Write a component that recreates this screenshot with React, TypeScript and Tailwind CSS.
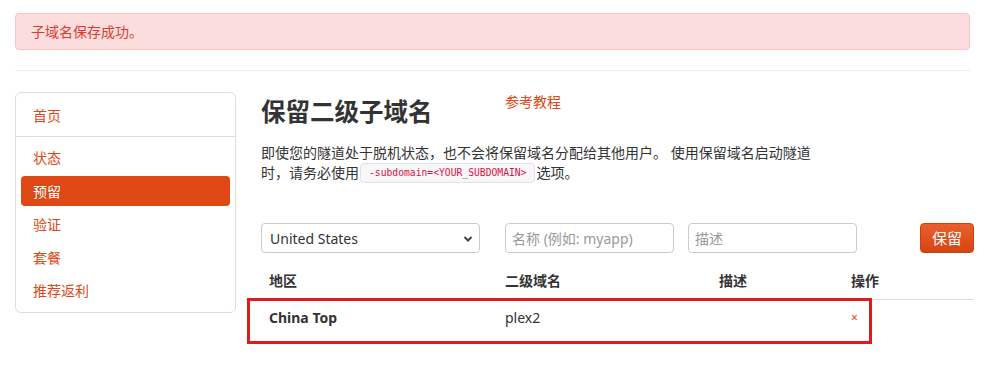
const font = { fontFamily: '"Noto Sans", "Noto Sans CJK SC", sans-serif' };

const navItems = ['状态', '预留', '验证', '套餐', '推荐返利'];

function Sidebar() {
  return (
    <div className="w-[221px] shrink-0 self-start rounded-[6px] border border-[#ddd] bg-white px-[5px] pb-[5px] pt-[6px] text-[14px]">
      <div className="flex h-[33px] items-center px-[12px] text-[#dd4814]">首页</div>
      <div className="-mx-[5px] my-[4px] h-px bg-[#ddd]" />
      {navItems.map((label) =>
        label === '预留' ? (
          <div key={label} className="flex h-[34px] items-center">
            <div className="flex h-[30px] w-full items-center rounded-[4px] bg-[#dd4814] px-[12px] text-white">{label}</div>
          </div>
        ) : (
          <div key={label} className="flex h-[33px] items-center px-[12px] text-[#dd4814]">
            {label}
          </div>
        )
      )}
    </div>
  );
}

function ReserveForm() {
  return (
    <div className="mt-[40px] flex h-[30px] items-center text-[14px]">
      <div className="relative h-[30px] w-[219px] rounded-[4px] border border-[#ccc] bg-white">
        <div className="flex h-full items-center pl-[8px] text-[#333]">United States</div>
        <svg className="absolute right-[6px] top-[11px]" width="10" height="8" viewBox="0 0 10 8">
          <path d="M1.5 2 L5 5.5 L8.5 2" fill="none" stroke="#444" strokeWidth="2" />
        </svg>
      </div>
      <div className="ml-[25px] flex h-[30px] w-[169px] items-center rounded-[4px] border border-[#ccc] bg-white px-[6px] text-[#999]">
        名称 (例如: myapp)
      </div>
      <div className="ml-[14px] flex h-[30px] w-[169px] items-center rounded-[4px] border border-[#ccc] bg-white px-[6px] text-[#999]">
        描述
      </div>
      <button className="ml-[63px] flex h-[30px] w-[54px] items-center justify-center rounded-[4px] border border-[#c8410f] bg-gradient-to-b from-[#e8602e] to-[#d6440f] text-[15px] text-white">
        保留
      </button>
    </div>
  );
}

function SubdomainTable() {
  return (
    <div className="mt-[10px] text-[14px] text-[#333]">
      <div className="grid grid-cols-[236px_214px_132px_1fr] border-b border-[#ddd] font-bold">
        <div className="px-[8px] py-[8px] leading-[20px]">地区</div>
        <div className="px-[8px] py-[8px] leading-[20px]">二级域名</div>
        <div className="px-[8px] py-[8px] leading-[20px]">描述</div>
        <div className="px-[8px] py-[8px] leading-[20px]">操作</div>
      </div>
      <div className="relative grid grid-cols-[236px_214px_132px_1fr]">
        <div className="px-[8px] py-[8px] font-bold leading-[20px]">China Top</div>
        <div className="px-[8px] py-[8px] leading-[20px]">plex2</div>
        <div className="px-[8px] py-[8px] leading-[20px]"></div>
        <div className="px-[8px] py-[8px] text-[12px] leading-[20px] text-[#dd4814]">×</div>
        <div className="pointer-events-none absolute -left-[14px] -top-[2px] h-[46px] w-[625px] border-[3px] border-[#e01b1b]" />
      </div>
    </div>
  );
}

export default function App() {
  return (
    <div className="min-h-[371px] w-[985px] bg-white px-[15px] pt-[13px]" style={font}>
      {/* 提示 */}
      <div className="flex h-[37px] items-center rounded-[4px] border border-[#f6c6c6] bg-[#fadddc] px-[15px] text-[14px] text-[#dc3b2f]">
        子域名保存成功。
      </div>
      <div className="mt-[20px] h-px bg-[#eee]" />

      <div className="mt-[21px] flex gap-[25px]">
        <Sidebar />

        <div className="flex-1">
          <div className="flex items-start">
            <h2 className="mt-[7px] w-[244px] text-[24.5px] font-bold leading-[26px] text-[#333]">保留二级子域名</h2>
            <a className="text-[14px] leading-[20px] text-[#dd4814]">参考教程</a>
          </div>
          <p className="mt-[18px] w-[555px] text-[14px] leading-[20px] text-[#333]">
            即使您的隧道处于脱机状态，也不会将保留域名分配给其他用户。 使用保留域名启动隧道时，请务必使用
            <code
              className="mx-[1px] inline-block h-[20px] rounded-[4px] border border-[#e1e1e8] bg-[#f7f7f9] px-[8px] align-top text-[9.7px] leading-[18px] text-[#dd1144]"
              style={{ fontFamily: '"DejaVu Sans Mono", monospace' }}
            >
              -subdomain=&lt;YOUR_SUBDOMAIN&gt;
            </code>
            选项。
          </p>

          <ReserveForm />
          <SubdomainTable />
        </div>
      </div>
    </div>
  );
}
